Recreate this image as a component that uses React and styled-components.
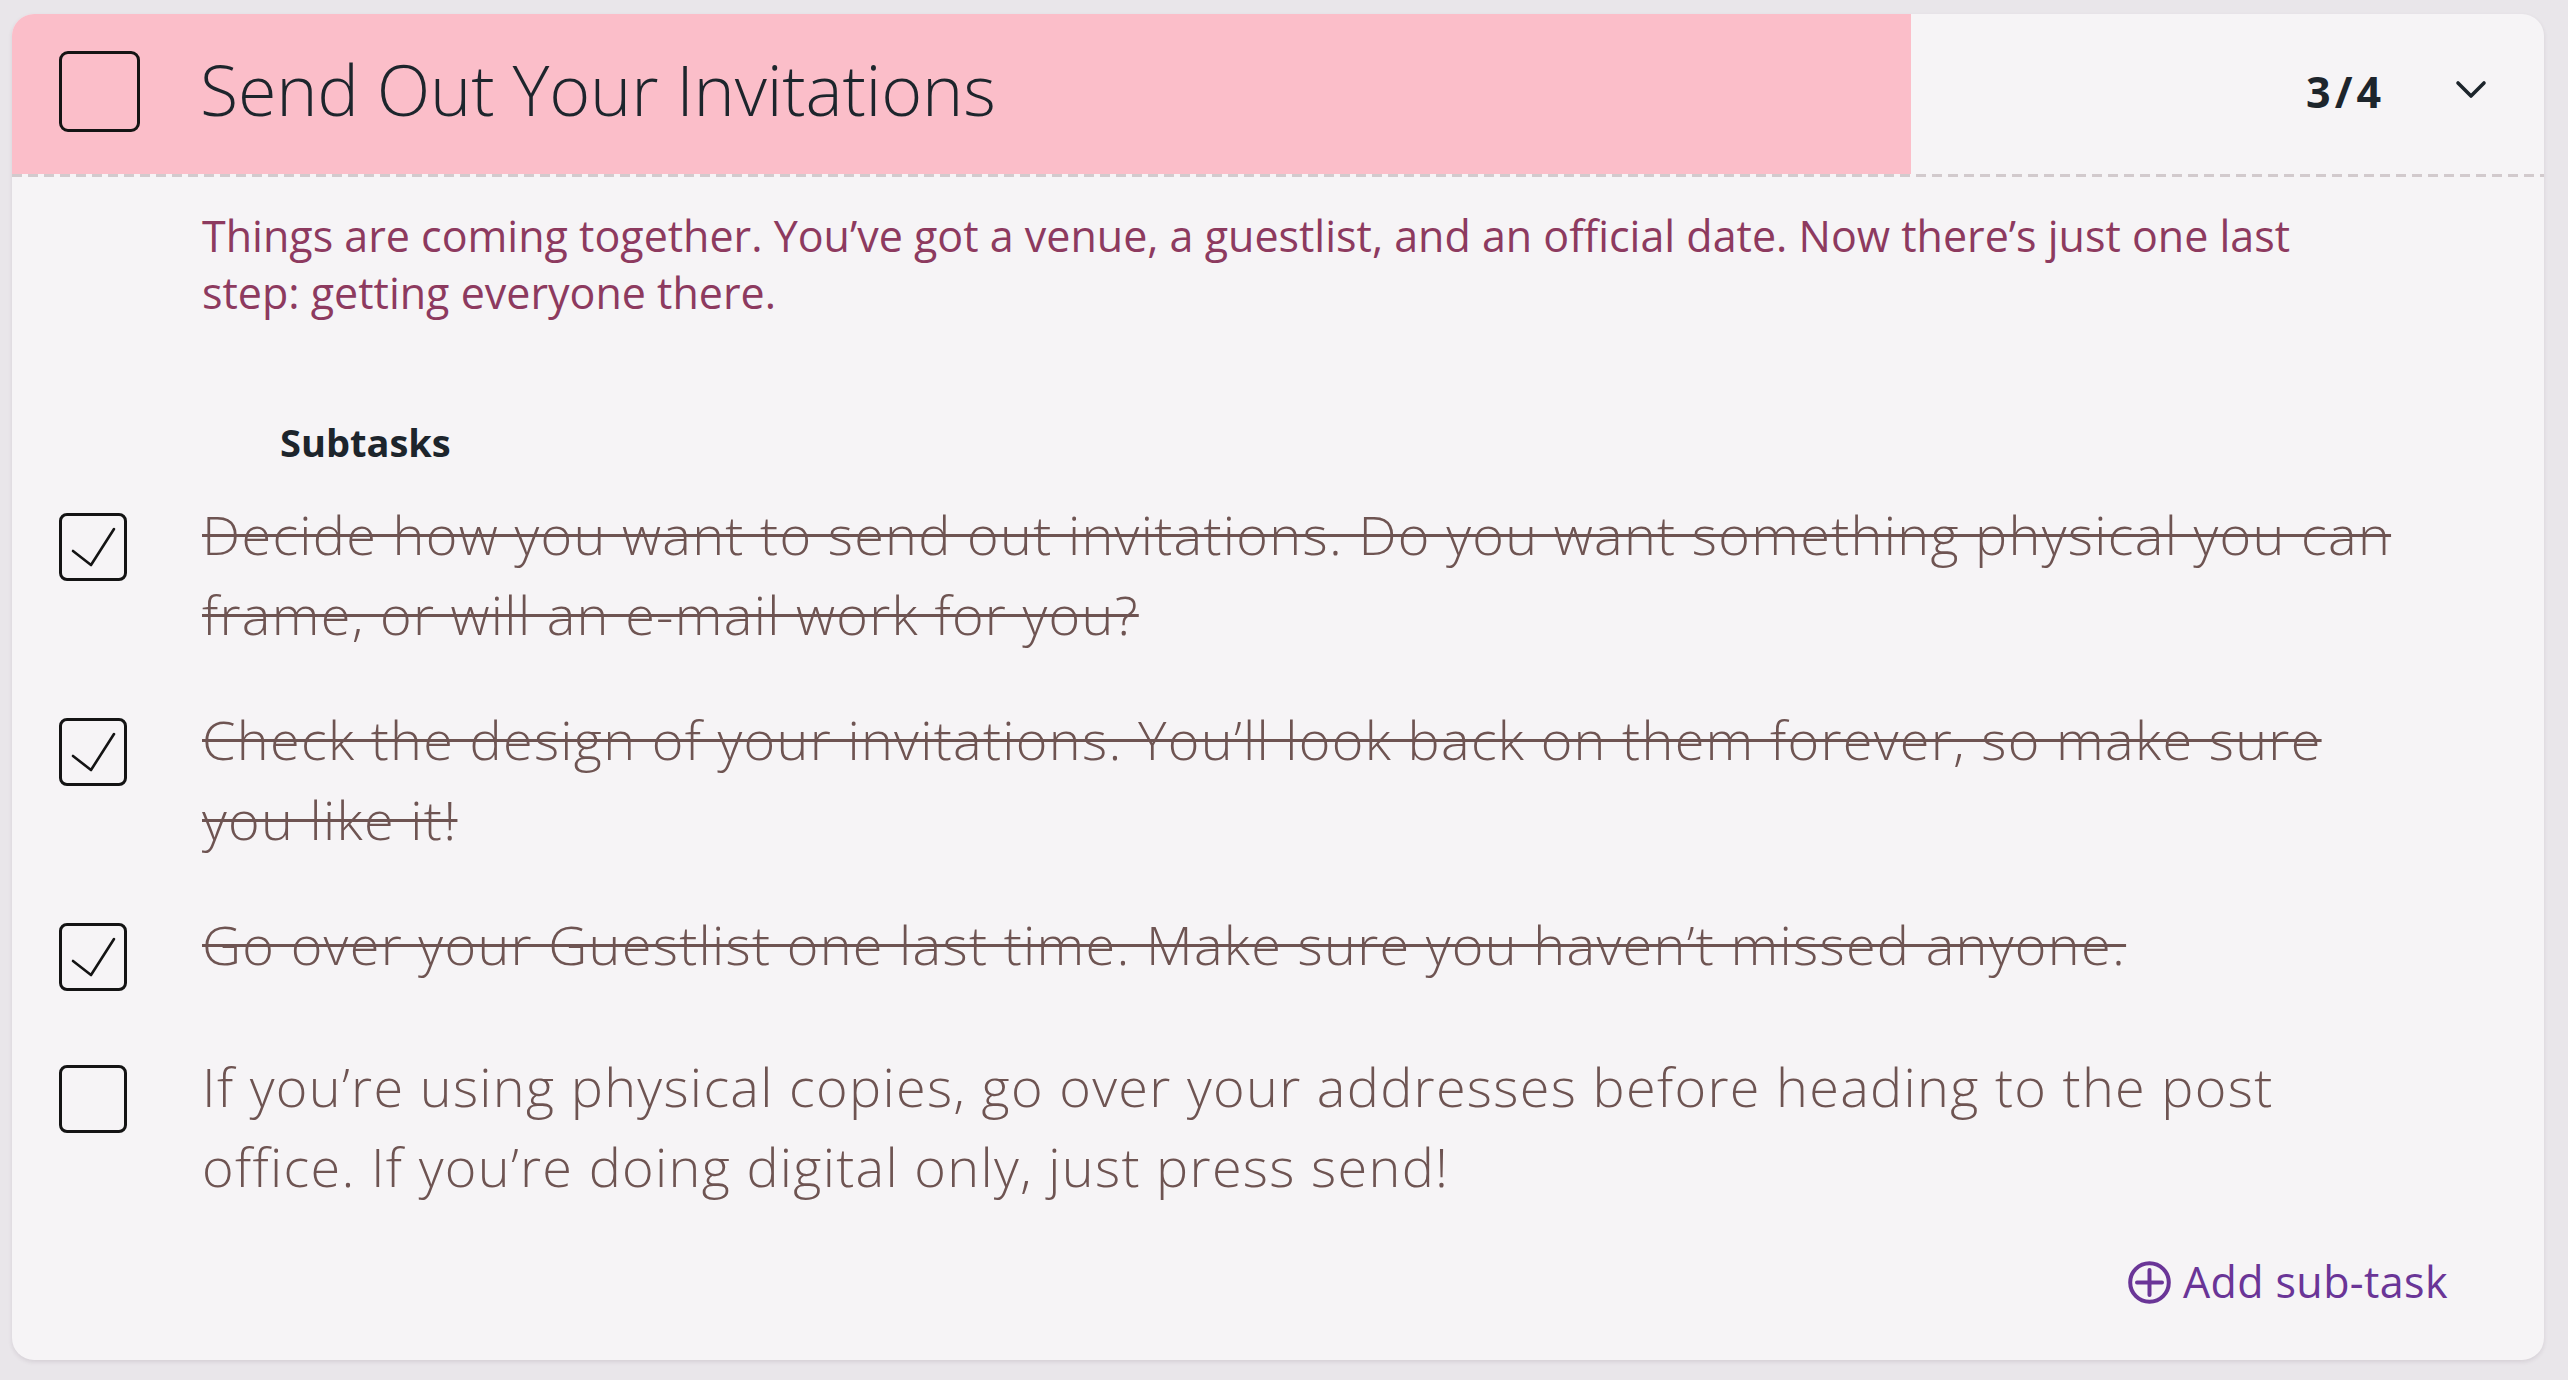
import React from 'react';
import styled, { createGlobalStyle } from 'styled-components';

const GlobalStyle = createGlobalStyle`
  html, body {
    margin: 0;
    padding: 0;
    background: #e9e6ea;
  }
  body {
    font-family: "Open Sans", "Noto Sans", sans-serif;
  }
  * { box-sizing: border-box; }
`;

const Page = styled.div`
  width: 2568px;
  min-height: 1380px;
  padding: 14px 24px 20px 12px;
  background: #e9e6ea;
`;

const Card = styled.section`
  background: #f6f4f6;
  border-radius: 22px;
  overflow: hidden;
  box-shadow: 0 2px 4px rgba(70, 50, 70, 0.12);
`;

const Header = styled.header`
  display: flex;
  align-items: center;
  height: 160px;
  padding: 0 57px 10px 47px;
  background: linear-gradient(
    to right,
    #fbbec9 ${(p) => p.$progress}%,
    transparent ${(p) => p.$progress}%
  );
`;

const HeaderBox = styled.span`
  flex: none;
  width: 81px;
  height: 81px;
  border: 3px solid #141414;
  border-radius: 9px;
  margin-top: 5px;
`;

const Title = styled.h1`
  flex: 1;
  margin: 0 0 0 60px;
  font-size: 70px;
  font-weight: 300;
  line-height: 84px;
  letter-spacing: -0.2px;
  color: #1d252c;
`;

const Count = styled.span`
  font-size: 43px;
  font-weight: 700;
  letter-spacing: 4px;
  color: #1d252c;
  margin-right: 70px;
  margin-top: 4px;
`;

const Chevron = styled.svg`
  flex: none;
  display: block;
`;

const Divider = styled.div`
  height: 3px;
  background: repeating-linear-gradient(
    to right,
    #d2cacd 0 10px,
    transparent 10px 16px
  );
`;

const Body = styled.div`
  display: flex;
  flex-direction: column;
  padding: 30px 96px 53px 47px;
`;

const Description = styled.p`
  margin: 0 118px 0 143px;
  font-size: 43px;
  line-height: 57px;
  font-weight: 400;
  color: #8d3a5f;
`;

const SectionLabel = styled.h2`
  margin: 98px 0 28px 221px;
  font-size: 38px;
  line-height: 47px;
  font-weight: 700;
  color: #1d252c;
`;

const List = styled.ul`
  list-style: none;
  margin: 0;
  padding: 0 43px 0 0;
  display: flex;
  flex-direction: column;
  gap: 45px;
`;

const Row = styled.li`
  display: flex;
  align-items: flex-start;
  gap: 75px;
`;

const Box = styled.span`
  flex: none;
  width: 68px;
  height: 68px;
  margin: 19px 0 10px;
  border: 3px solid #141414;
  border-radius: 8px;
  display: block;
`;

const TaskText = styled.span`
  flex: 1;
  font-size: 54px;
  line-height: 80px;
  font-weight: 300;
  letter-spacing: 1.3px;
  color: #6e5452;
  text-decoration: ${(p) => (p.$done ? 'line-through' : 'none')};
  text-decoration-thickness: 3px;
  text-decoration-color: #6e5452;
`;

const Footer = styled.div`
  display: flex;
  justify-content: flex-end;
  margin-top: 51px;
`;

const AddButton = styled.button`
  display: inline-flex;
  align-items: center;
  gap: 12px;
  padding: 0;
  border: none;
  background: none;
  font-family: inherit;
  font-size: 43px;
  line-height: 50px;
  font-weight: 400;
  letter-spacing: 0.4px;
  color: #6a3597;
  cursor: pointer;
`;

const tasks = [
  {
    text: 'Decide how you want to send out invitations. Do you want something physical you can frame, or will an e-mail work for you?',
    done: true,
  },
  {
    text: 'Check the design of your invitations. You\u2019ll look back on them forever, so make sure you like it!',
    done: true,
  },
  {
    text: 'Go over your Guestlist one last time. Make sure you haven\u2019t missed anyone.',
    done: true,
  },
  {
    text: 'If you\u2019re using physical copies, go over your addresses before heading to the post office. If you\u2019re doing digital only, just press send!',
    done: false,
  },
];

function Check() {
  return (
    <svg width="62" height="62" viewBox="0 0 62 62" fill="none">
      <polyline
        points="11,35 29,49 52,13"
        stroke="#141414"
        strokeWidth="2.6"
        strokeLinecap="round"
        strokeLinejoin="round"
      />
    </svg>
  );
}

function PlusCircle() {
  return (
    <svg width="43" height="43" viewBox="0 0 43 43" fill="none">
      <circle cx="21.5" cy="21.5" r="19.3" stroke="#6a3597" strokeWidth="4" />
      <line x1="9" y1="21.5" x2="34" y2="21.5" stroke="#6a3597" strokeWidth="4" strokeLinecap="round" />
      <line x1="21.5" y1="9" x2="21.5" y2="34" stroke="#6a3597" strokeWidth="4" strokeLinecap="round" />
    </svg>
  );
}

export default function App() {
  const doneCount = tasks.filter((t) => t.done).length;
  const progress = (doneCount / tasks.length) * 100;
  return (
    <>
      <GlobalStyle />
      <Page>
        <Card>
          <Header $progress={progress}>
            <HeaderBox />
            <Title>Send Out Your Invitations</Title>
            <Count>
              {doneCount}/{tasks.length}
            </Count>
            <Chevron width="32" height="19" viewBox="0 0 32 19" fill="none">
              <polyline
                points="3,3 16,16 29,3"
                stroke="#1d252c"
                strokeWidth="3.6"
                strokeLinecap="round"
                strokeLinejoin="round"
              />
            </Chevron>
          </Header>
          <Divider />
          <Body>
            <Description>
              Things are coming together. You’ve got a venue, a guestlist, and an official date. Now there’s just one last step: getting everyone there.
            </Description>
            <SectionLabel>Subtasks</SectionLabel>
            <List>
              {tasks.map((t, i) => (
                <Row key={i}>
                  <Box>{t.done && <Check />}</Box>
                  <TaskText $done={t.done}>{t.text}</TaskText>
                </Row>
              ))}
            </List>
            <Footer>
              <AddButton type="button">
                <PlusCircle />
                Add sub-task
              </AddButton>
            </Footer>
          </Body>
        </Card>
      </Page>
    </>
  );
}
